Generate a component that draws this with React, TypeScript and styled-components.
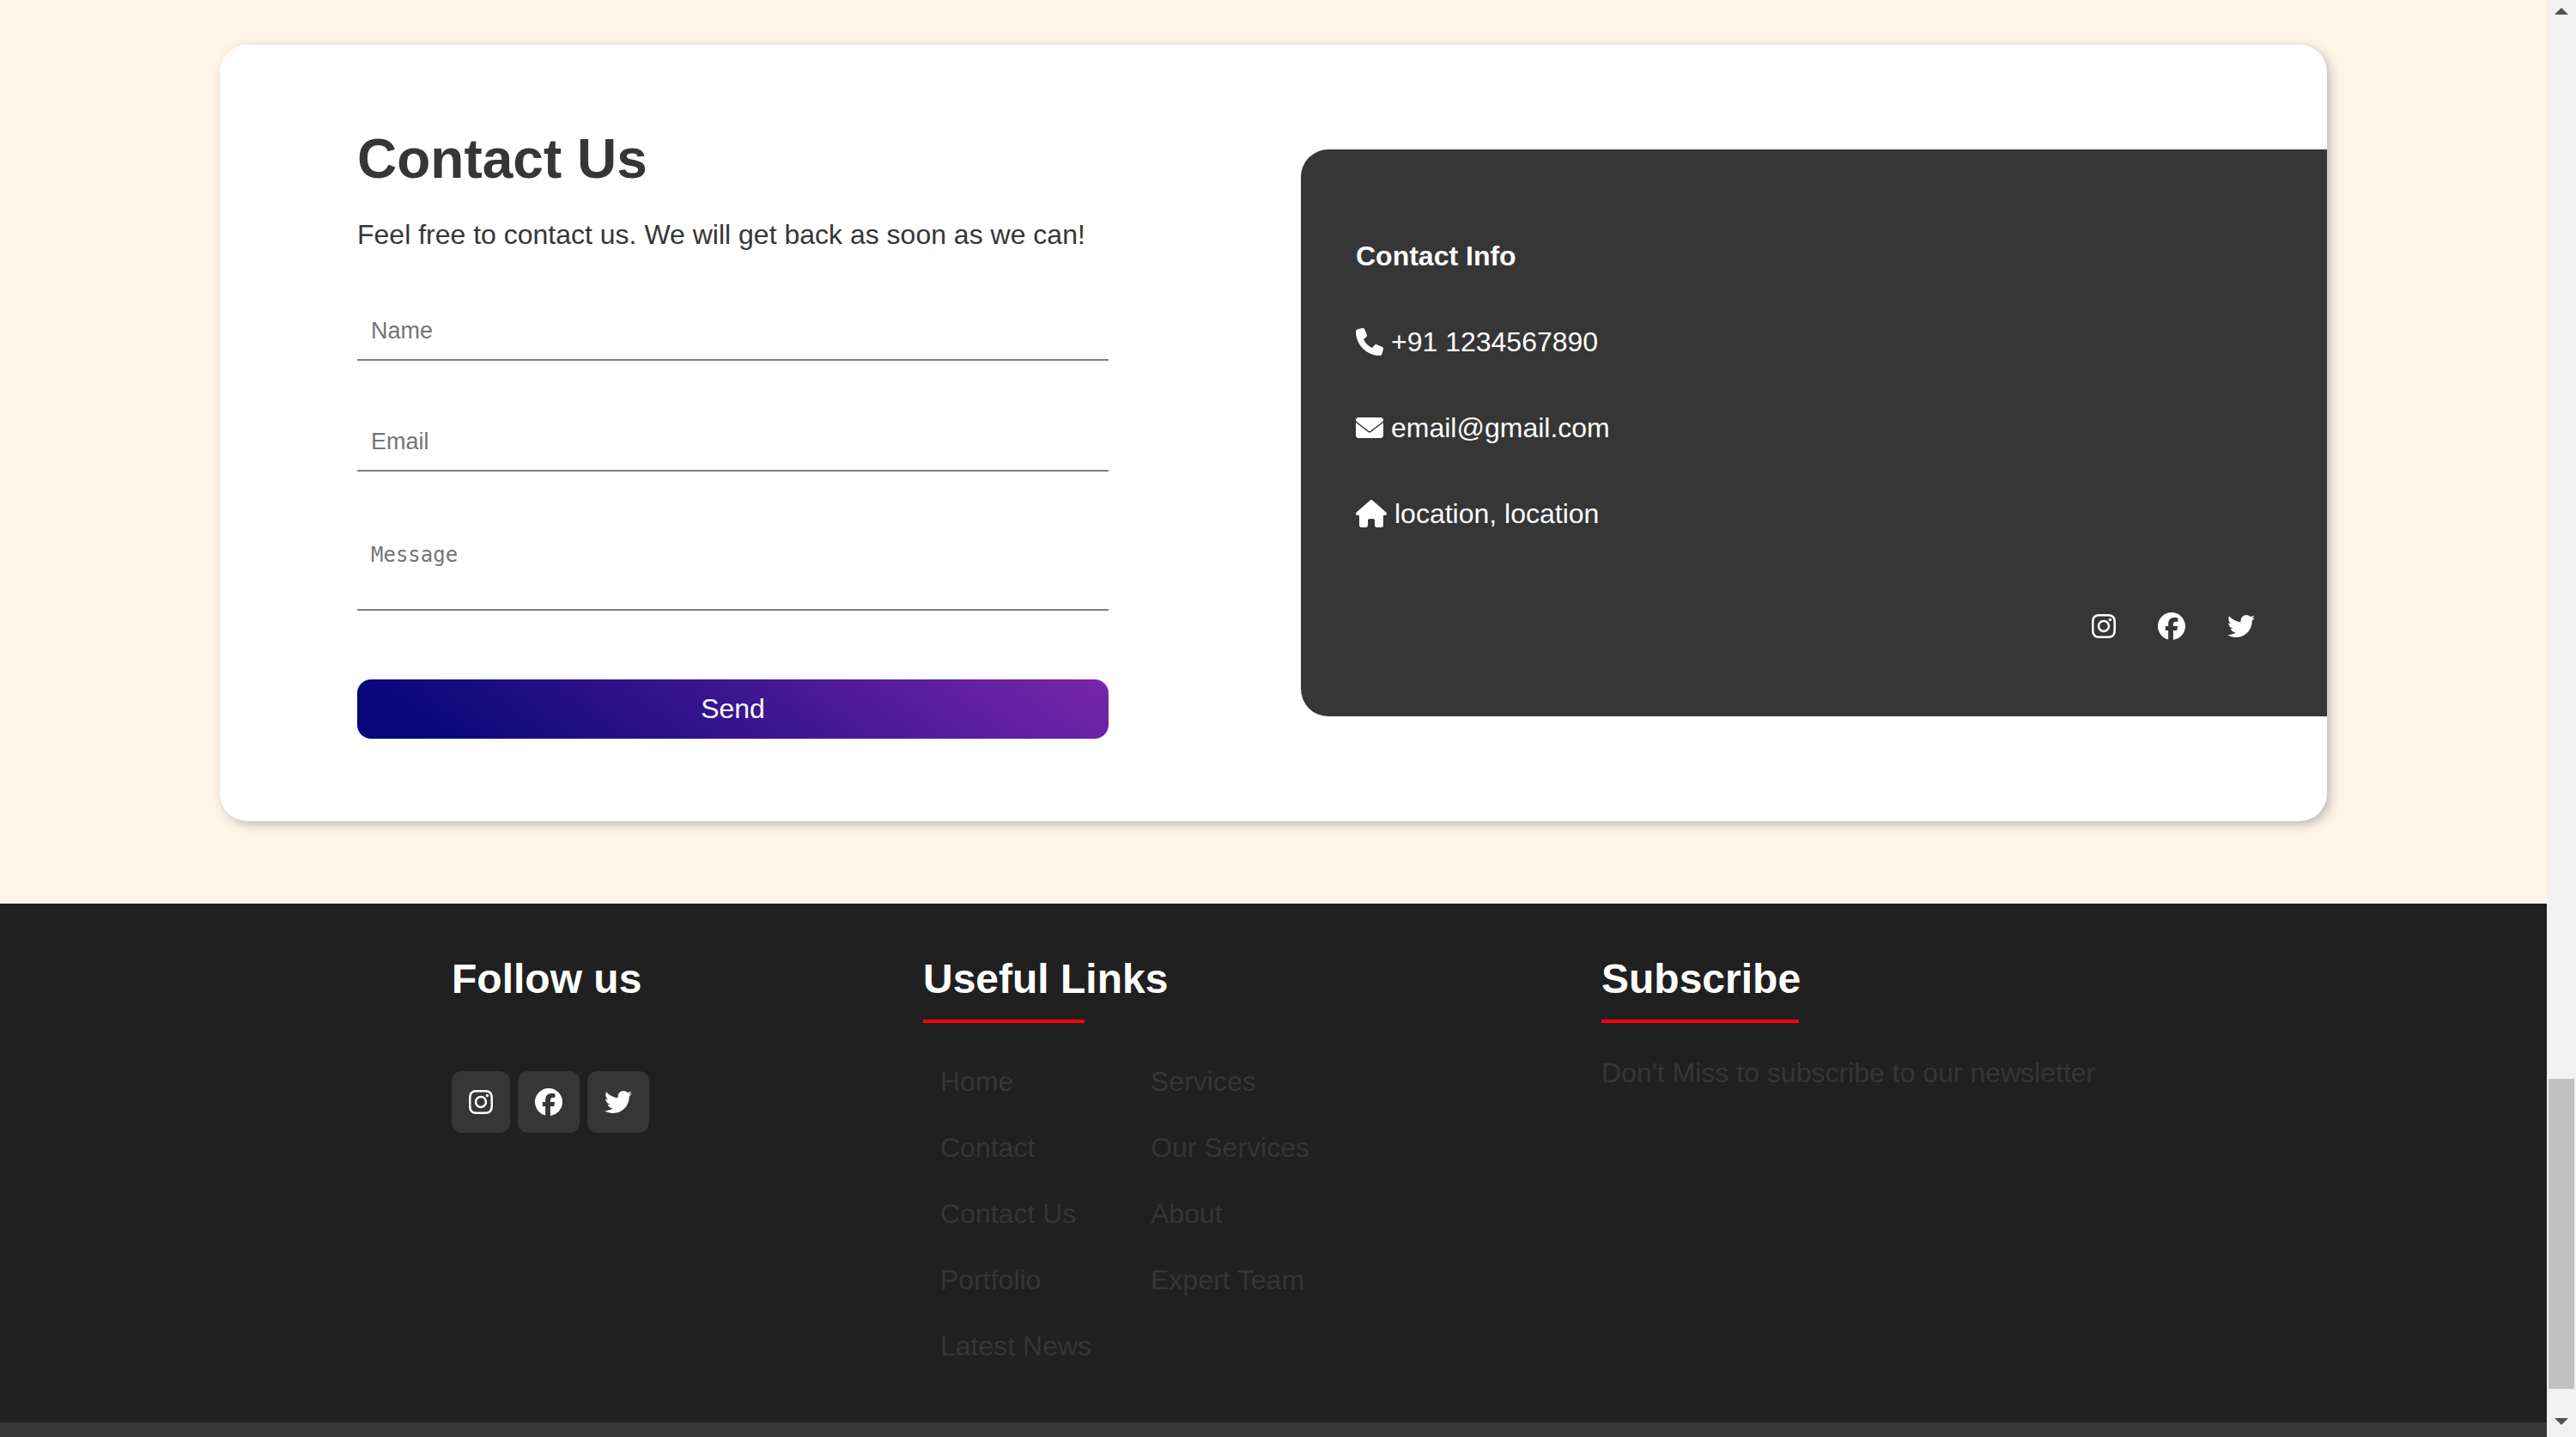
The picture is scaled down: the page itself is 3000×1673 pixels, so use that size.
import React from "react";
import styled, { createGlobalStyle } from "styled-components";
import { FaPhone, FaHouse, FaInstagram, FaFacebook, FaTwitter } from "react-icons/fa6";

const GlobalStyle = createGlobalStyle`
  * { box-sizing: border-box; }
  body {
    margin: 0;
    background: #fff4e8;
    color: #363636;
    font-family: "Liberation Sans", Arial, sans-serif;
    font-size: 32px;
    line-height: 36px;
  }
  h1, h2, h3, p, ul { margin: 0; padding: 0; }
  ul { list-style: none; }
  a { color: inherit; text-decoration: none; }
  svg { display: block; flex: none; }
`;

const Shell = styled.div`
  display: grid;
  grid-template-columns: minmax(0, 1fr) 34px;
  height: 100vh;
  overflow: hidden;
`;

const Page = styled.div`
  display: flex;
  flex-direction: column;
  min-height: 0;
  overflow: hidden;
`;

const ContactSection = styled.section`
  flex: none;
  padding: 52px 256px 96px;
`;

const Card = styled.div`
  display: grid;
  grid-template-columns: minmax(0, 875fr) minmax(0, 1195fr);
  gap: 224px;
  align-items: center;
  padding-left: 160px;
  background: #fff;
  border-radius: 32px;
  box-shadow: 4px 4px 12px rgba(54, 54, 54, 0.3);
`;

const Form = styled.form`
  display: flex;
  flex-direction: column;
  gap: 60px;
  padding: 96px 0;
`;

const Intro = styled.div`
  display: grid;
  gap: 32px;
`;

const Title = styled.h1`
  font-size: 64px;
  line-height: 75px;
`;

const TextInput = styled.input`
  display: block;
  width: 100%;
  height: 69px;
  padding: 2px 16px 0;
  border: 0;
  border-bottom: 2px solid #808080;
  border-radius: 0;
  outline: none;
  background: transparent;
  font: 27px "Liberation Sans", Arial, sans-serif;
  &::placeholder { color: #757575; opacity: 1; }
`;

const MessageInput = styled.textarea`
  display: block;
  width: 100%;
  height: 102px;
  padding: 21px 16px;
  border: 0;
  border-bottom: 2px solid #808080;
  border-radius: 0;
  outline: none;
  resize: none;
  overflow: hidden;
  background: transparent;
  font: 24px/32px "DejaVu Sans Mono", monospace;
  &::placeholder { color: #757575; opacity: 1; }
`;

const SendButton = styled.button`
  margin-top: 20px;
  padding: 16px;
  border: 0;
  border-radius: 16px;
  background: linear-gradient(35deg, #06067a 8%, #7826ab);
  color: #fff;
  font: 32px/37px "Liberation Sans", Arial, sans-serif;
`;

const InfoPanel = styled.aside`
  padding: 106px 84px 89px 64px;
  border-radius: 32px 0 0 32px;
  background: #363636;
  color: #fff;
`;

const InfoTitle = styled.h2`
  font-size: 32px;
  line-height: 36px;
`;

const InfoLine = styled.p`
  display: flex;
  align-items: center;
  gap: 9px;
  margin-top: 64px;
`;

const InfoSocial = styled.div`
  display: flex;
  justify-content: flex-end;
  gap: 49px;
  margin-top: 97px;
`;

const PhoneIcon = styled(FaPhone)`
  width: 32px;
  height: 32px;
`;

const HouseIcon = styled(FaHouse)`
  width: 36px;
  height: 32px;
`;

const EnvelopeIcon = () => (
  <svg width="32" height="32" viewBox="0 0 512 512" fill="currentColor" aria-hidden="true">
    <path d="M48 64h416c26.5 0 48 21.5 48 48 0 13-6 25-17 33L272 316c-9 7-23 7-32 0L17 145C6 137 0 125 0 112 0 85.500 21.500 64 48 64z" />
    <path d="M0 161l234 177c13 10 31 10 44 0l234-177v239c0 26.500-21.500 48-48 48H48c-26.500 0-48-21.500-48-48z" />
  </svg>
);

const SocialLink = styled.a<{ $width: number; $tile?: boolean }>`
  padding: ${(p) => (p.$tile ? 20 : 0)}px;
  border-radius: 12px;
  background: #363636;
  color: #fff;
  svg { width: ${(p) => p.$width}px; height: 32px; }
`;

const Footer = styled.footer`
  display: grid;
  grid-template-columns: 549fr 790fr 1101fr;
  flex: none;
  padding: 60px 0 30px 526px;
  background: #202020;
`;

const FooterColumn = styled.div`
  display: flex;
  flex-direction: column;
  align-items: flex-start;
`;

const FooterTitle = styled.h3`
  color: #fff;
  font-size: 48px;
  line-height: 55px;
`;

const Rule = styled.span<{ $width: number }>`
  width: ${(p) => p.$width}px;
  height: 4px;
  margin: 20px 0 40px;
  background: #f00;
`;

const SocialTiles = styled.div`
  display: flex;
  gap: 9px;
  margin-top: 80px;
`;

const LinkGrid = styled.div`
  display: grid;
  grid-template-columns: 245px auto;
  padding: 10px 0 0 20px;
`;

const LinkItem = styled.li`
  padding-bottom: 40px;
  line-height: 37px;
`;

const Newsletter = styled.p`
  line-height: 37px;
`;

const BottomBar = styled.div`
  flex: 1 0 auto;
  background: #363636;
`;

const ScrollTrack = styled.div`
  display: flex;
  flex-direction: column;
  align-items: center;
  background: #f1f1f1;
`;

const ScrollArrow = styled.span<{ $down?: boolean }>`
  width: 16px;
  height: 8px;
  margin: ${(p) => (p.$down ? "0 0 14px" : "9px 0 0")};
  background: #505050;
  clip-path: ${(p) => (p.$down ? "polygon(0 0, 100% 0, 50% 100%)" : "polygon(50% 0, 100% 100%, 0 100%)")};
`;

const ScrollSpace = styled.span`
  flex: 1239 1 0;
`;

const ScrollThumb = styled.span`
  flex: 361 1 0;
  width: 30px;
  margin-bottom: 34px;
  background: #c1c1c1;
`;

const socials = [
  { name: "Instagram", Icon: FaInstagram, width: 28 },
  { name: "Facebook", Icon: FaFacebook, width: 32 },
  { name: "Twitter", Icon: FaTwitter, width: 32 },
];

const linkColumns = [
  ["Home", "Contact", "Contact Us", "Portfolio", "Latest News"],
  ["Services", "Our Services", "About", "Expert Team"],
];

const SocialLinks = ({ tile }: { tile?: boolean }) => (
  <>
    {socials.map(({ name, Icon, width }) => (
      <SocialLink key={name} href="#" aria-label={name} $width={width} $tile={tile}>
        <Icon />
      </SocialLink>
    ))}
  </>
);

export default function App() {
  return (
    <>
      <GlobalStyle />
      <Shell>
        <Page>
          <ContactSection>
            <Card>
              <Form onSubmit={(e) => e.preventDefault()}>
                <Intro>
                  <Title>Contact Us</Title>
                  <p>Feel free to contact us. We will get back as soon as we can!</p>
                </Intro>
                <TextInput type="text" aria-label="Name" placeholder="Name" />
                <TextInput type="email" aria-label="Email" placeholder="Email" />
                <MessageInput aria-label="Message" placeholder="Message" />
                <SendButton type="submit">Send</SendButton>
              </Form>
              <InfoPanel>
                <InfoTitle>Contact Info</InfoTitle>
                <InfoLine><PhoneIcon />+91 1234567890</InfoLine>
                <InfoLine><EnvelopeIcon />email@gmail.com</InfoLine>
                <InfoLine><HouseIcon />location, location</InfoLine>
                <InfoSocial><SocialLinks /></InfoSocial>
              </InfoPanel>
            </Card>
          </ContactSection>
          <Footer>
            <FooterColumn>
              <FooterTitle>Follow us</FooterTitle>
              <SocialTiles><SocialLinks tile /></SocialTiles>
            </FooterColumn>
            <FooterColumn>
              <FooterTitle>Useful Links</FooterTitle>
              <Rule $width={188} />
              <LinkGrid>
                {linkColumns.map((items) => (
                  <ul key={items[0]}>
                    {items.map((item) => (
                      <LinkItem key={item}><a href="#">{item}</a></LinkItem>
                    ))}
                  </ul>
                ))}
              </LinkGrid>
            </FooterColumn>
            <FooterColumn>
              <FooterTitle>Subscribe</FooterTitle>
              <Rule $width={230} />
              <Newsletter>Don't Miss to subscribe to our newsletter</Newsletter>
            </FooterColumn>
          </Footer>
          <BottomBar />
        </Page>
        <ScrollTrack aria-hidden="true">
          <ScrollArrow />
          <ScrollSpace />
          <ScrollThumb />
          <ScrollArrow $down />
        </ScrollTrack>
      </Shell>
    </>
  );
}
